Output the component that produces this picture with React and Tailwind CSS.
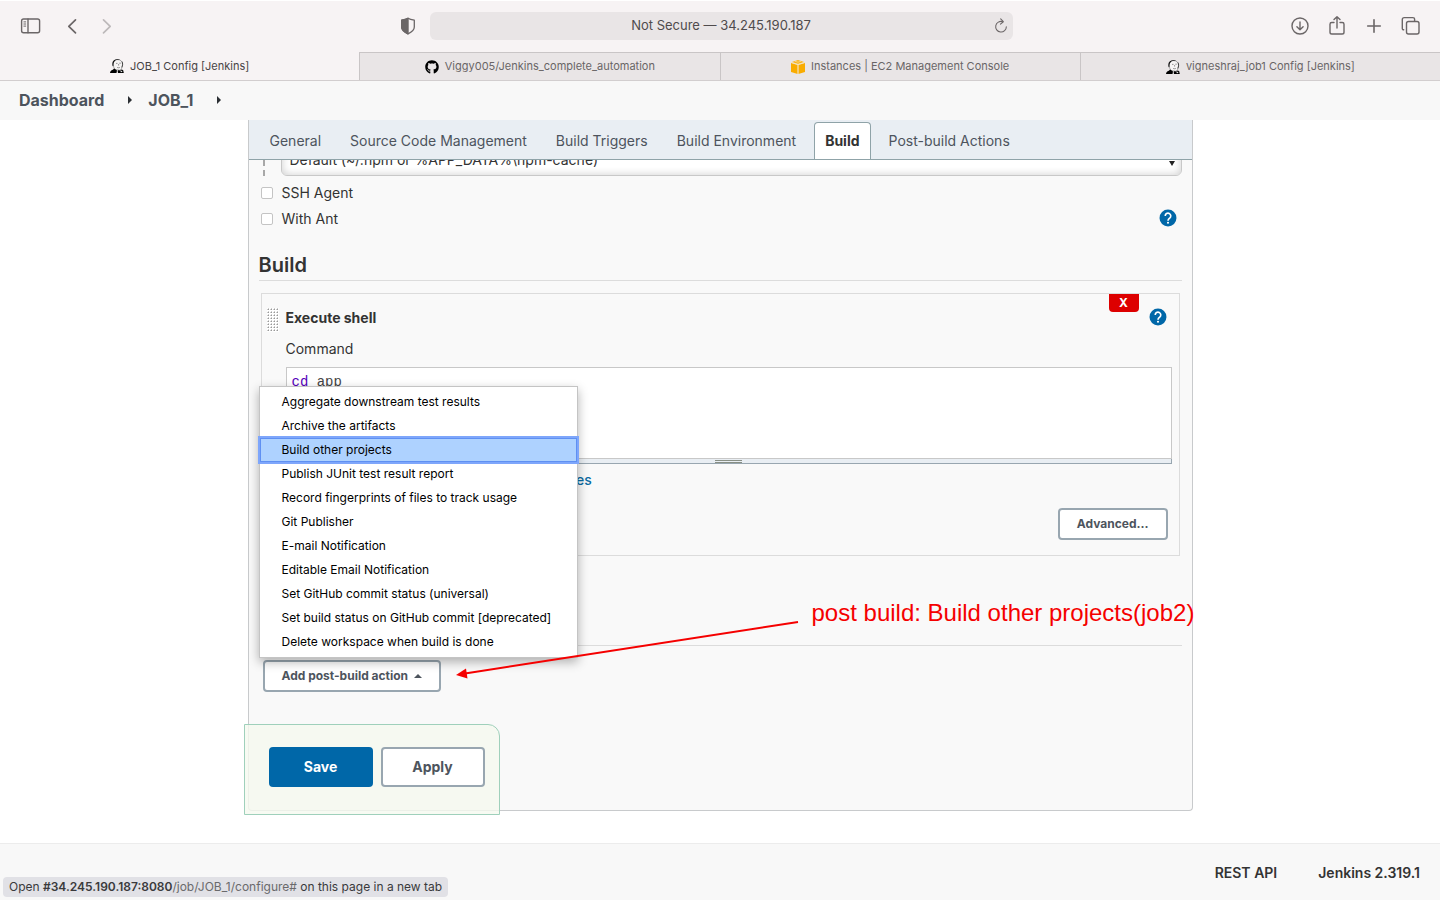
import { useState } from "react";
import { FaGithub } from "react-icons/fa";

const browserTabs = [
  { title: "JOB_1 Config [Jenkins]", icon: "jenkins", active: true },
  { title: "Viggy005/Jenkins_complete_automation", icon: "github" },
  { title: "Instances | EC2 Management Console", icon: "aws" },
  { title: "vigneshraj_job1 Config [Jenkins]", icon: "jenkins" },
];

const sections = [
  "General",
  "Source Code Management",
  "Build Triggers",
  "Build Environment",
  "Build",
  "Post-build Actions",
];

const postBuildActions = [
  "Aggregate downstream test results",
  "Archive the artifacts",
  "Build other projects",
  "Publish JUnit test result report",
  "Record fingerprints of files to track usage",
  "Git Publisher",
  "E-mail Notification",
  "Editable Email Notification",
  "Set GitHub commit status (universal)",
  "Set build status on GitHub commit [deprecated]",
  "Delete workspace when build is done",
];

function JenkinsIcon() {
  return (
    <svg viewBox="0 0 14 14" className="size-3.5" aria-hidden="true">
      <path d="M3 5.500C3 2 5 .600 7.600.600c3 0 5 1.800 5 5.200 0 2.700-1.300 4.700-3 5.400L4.500 10.500z" fill="#f6f4f4" stroke="#777" strokeWidth=".6" />
      <path d="M2.700 7.200C1.900 4.500 2.500 1.900 4.300.900 6.200-.1 9 .1 10.600 1.200 8.800.800 7.400 1.200 6.300 1.100 4.800 1.600 4.300 2.800 3.700 4 3.300 4.800 3.700 6.200 3.300 7z" fill="#111" />
      <path d="M12 2.500c.9 1.600.8 4-.3 5.900" fill="none" stroke="#222" strokeWidth=".8" />
      <path d="M6 4.400h1.500M9.300 4.200h1.500M8.600 5v1.600M7 8.300c1 .6 2.200.6 3 0" fill="none" stroke="#555" strokeWidth=".6" />
      <path d="M0 14c.1-1.700 1-2.700 2.800-3.300l1.500-1.300L7 11.600l-.5 2.400z" fill="#000" />
      <path d="M8 14l-.4-2.300 1.300-.7 1.300.7 1-1.200 1.900.4.700 3.100z" fill="#000" />
      <path d="M10.600 11.800h1.600v1.300h-1.600z" fill="#ddd" />
    </svg>
  );
}

function AwsIcon() {
  return (
    <svg viewBox="0 0 14 14" className="size-3.5" aria-hidden="true">
      <path d="M.9 2 7 .1 13.100 2 7 3.900z" fill="#f8b218" />
      <path d="M0 2.900 6.600 4.900V14L0 12z" fill="#f9ac00" />
      <path d="M14 2.900 7.400 4.900V14L14 12z" fill="#f9ac00" />
      <path d="M.2 2.400 7 4.400l6.800-2M7 4.400V14M3.800 1.200 7 2.200l3.200-1" fill="none" stroke="#fbe3ab" strokeWidth=".7" />
    </svg>
  );
}

function TabIcon({ name }) {
  if (name === "github") return <FaGithub className="size-3.5 text-black" aria-hidden="true" />;
  if (name === "aws") return <AwsIcon />;
  return <JenkinsIcon />;
}

function Glyph({ children, className = "size-6" }) {
  return (
    <svg
      viewBox="0 0 24 24"
      className={className}
      fill="none"
      stroke="currentColor"
      strokeWidth="1.4"
      strokeLinecap="round"
      strokeLinejoin="round"
      aria-hidden="true"
    >
      {children}
    </svg>
  );
}

function BrowserBar() {
  return (
    <header className="bg-[#f7f3f4] text-[#6b6667]">
      <div className="flex h-13 items-center border-t border-white pr-0.5 pb-0.5">
        <div className="flex flex-1 items-center pl-[19px]">
          <button type="button" aria-label="Show sidebar">
            <Glyph>
              <rect x="2.600" y="5" width="18" height="13.800" rx="2" />
              <path d="M9 5v13.800" />
              <path d="M4.900 7.900h1.800M4.900 10h1.800M4.900 12.100h1.800" strokeWidth="1" />
            </Glyph>
          </button>
          <button type="button" aria-label="Back" className="ml-[17px]">
            <Glyph>
              <path d="M15.500 5.900 8.800 12.400l6.700 6.500" strokeWidth="1.700" />
            </Glyph>
          </button>
          <button type="button" aria-label="Forward" className="ml-[11px] text-[#bdb9ba]">
            <Glyph>
              <path d="M8.500 5.900l6.700 6.500-6.700 6.500" strokeWidth="1.700" />
            </Glyph>
          </button>
          <button type="button" aria-label="Privacy report" className="ml-auto mr-2.5">
            <Glyph>
              <path d="M12 4.300c-2 1.200-4.300 1.600-6.300 1.900V13c0 3.200 2.900 5.300 6.300 6.800 3.400-1.500 6.300-3.600 6.300-6.800V6.200c-2-.3-4.300-.7-6.300-1.900z" strokeWidth="1.300" />
              <path d="M12 4.300c-2 1.200-4.300 1.600-6.300 1.900V13c0 3.200 2.900 5.300 6.300 6.800z" fill="currentColor" />
            </Glyph>
          </button>
        </div>
        <div className="flex h-7 w-[583px] items-center rounded-md bg-[#e9e5e6]">
          <label htmlFor="address" className="sr-only">Address</label>
          <input
            id="address"
            defaultValue="Not Secure — 34.245.190.187"
            className="ml-5 min-w-0 flex-1 bg-transparent text-center text-[13px] text-[#4f4b4c] outline-none"
          />
          <button type="button" aria-label="Reload" className="mr-1">
            <Glyph className="size-4">
              <path d="M14.500 5.500A8 8 0 1 0 20 13" strokeWidth="1.600" />
              <path d="M11.500 1.300l4 4.300-4.300 3.700" strokeWidth="1.600" />
            </Glyph>
          </button>
        </div>
        <div className="flex flex-1 items-center justify-end gap-[13px] pr-[15px]">
          <button type="button" aria-label="Downloads">
            <Glyph>
              <circle cx="12" cy="12" r="8" />
              <path d="M12 8v7.500M8.900 12.700l3.100 3.100 3.100-3.100" />
            </Glyph>
          </button>
          <button type="button" aria-label="Share">
            <Glyph>
              <path d="M9 8.500H6.800c-1 0-1.800.8-1.800 1.700v8c0 1 .8 1.800 1.800 1.800h10.400c1 0 1.800-.8 1.800-1.800v-8c0-.9-.8-1.700-1.800-1.700H15" />
              <path d="M12 14V2.800M9 5.600l3-2.900 3 2.900" />
            </Glyph>
          </button>
          <button type="button" aria-label="New tab">
            <Glyph>
              <path d="M12 5.700v12.600M5.700 12h12.600" strokeWidth="1.600" />
            </Glyph>
          </button>
          <button type="button" aria-label="Tab overview">
            <Glyph>
              <rect x="7.500" y="7.500" width="12.500" height="12.500" rx="2" />
              <path d="M4.700 15.800c-.8 0-1.400-.6-1.400-1.400V5.600c0-1.100.9-2 2-2h8.600c1 0 1.700.6 1.700 1.500v2.200" />
            </Glyph>
          </button>
        </div>
      </div>
      <nav aria-label="Browser tabs" className="flex h-[29px] border-b border-[#d2cecf] text-[11px]">
        {browserTabs.map((tab) => (
          <button
            key={tab.title}
            type="button"
            className={
              tab.active
                ? "flex flex-1 items-center justify-center gap-1.5 text-[#474344]"
                : "flex flex-1 items-center justify-center gap-1.5 border-t border-l border-[#c9c5c6] bg-[#e9e5e6] text-[#696566]"
            }
          >
            <TabIcon name={tab.icon} />
            {tab.title}
          </button>
        ))}
      </nav>
    </header>
  );
}

function CrumbArrow() {
  return (
    <svg viewBox="0 0 4 8" className="h-2 w-1" aria-hidden="true">
      <path d="M0 0l4 4-4 4z" fill="#2b2f33" />
    </svg>
  );
}

function HelpButton({ topic }) {
  return (
    <button type="button" aria-label={"Help for " + topic} className="mb-0.5 size-[18px] shrink-0">
      <svg viewBox="0 0 24 24" className="size-[18px]" aria-hidden="true">
        <circle cx="12" cy="12" r="11.300" fill="#0067a8" />
        <path d="M8.300 9.200a3.700 3.700 0 1 1 6 2.900c-1.300 1-2.300 1.700-2.300 3.400" fill="none" stroke="#fff" strokeWidth="2.200" />
        <circle cx="12" cy="18.300" r="1.400" fill="#fff" />
      </svg>
    </button>
  );
}

function OptionRow({ id, label, help }) {
  return (
    <div className="flex h-[26px] items-center pl-0.5 pr-[5px]">
      <input
        id={id}
        type="checkbox"
        className="size-3 appearance-none rounded-xs border border-[#c4c4c4] bg-white checked:bg-[#0067a8]"
      />
      <label htmlFor={id} className="ml-[9px] flex-1 text-sm">{label}</label>
      {help && <HelpButton topic={label} />}
    </div>
  );
}

function SectionTitle({ children, className }) {
  return (
    <h2 className={"border-b border-[#dcdcdc] pb-[3px] text-xl leading-6 font-semibold " + className}>
      {children}
    </h2>
  );
}

const outlineButton =
  "h-8 rounded border-2 border-[#98a6b0] bg-white px-[17px] text-xs font-bold text-[#4d545d]";

function ShellStep() {
  const [command, setCommand] = useState("cd app");
  const [keyword, ...rest] = command.split(" ");
  return (
    <section className="mx-0.5 mt-3 flex border border-[#dcdcdc] pb-[15px] pl-[5px] pr-[7px]">
      <svg className="mt-3.5 h-6 w-3 shrink-0" aria-hidden="true">
        <defs>
          <pattern id="grip" width="3" height="3" patternUnits="userSpaceOnUse">
            <rect width="3" height="3" fill="#fff" />
            <rect x="1" y="1" width="1" height="1" fill="#999" />
            <rect x="0" y="1" width="1" height="1" fill="#ccc" />
            <rect x="1" y="0" width="1" height="1" fill="#ccc" />
          </pattern>
        </defs>
        <rect width="12" height="24" fill="url(#grip)" />
      </svg>
      <div className="ml-[7px] min-w-0 flex-1">
        <div className="flex items-start">
          <h3 className="mt-3.5 flex-1 text-sm font-bold">Execute shell</h3>
          <button
            type="button"
            aria-label="Delete build step"
            className="mr-2.5 h-[18px] w-[30px] rounded-b bg-[#d00] text-xs leading-[18px] font-bold text-white"
          >
            X
          </button>
          <div className="mt-3.5 mr-[5px] flex h-5 items-center">
            <HelpButton topic="Execute shell" />
          </div>
        </div>
        <label htmlFor="command" className="mt-[11px] block text-sm">Command</label>
        <div className="mt-2 grid h-[92px] border border-[#c8c8c8] bg-white font-['Liberation_Mono',monospace] text-sm">
          <pre aria-hidden="true" className="col-start-1 row-start-1 px-[5px] py-1 font-[inherit] text-[#444]">
            <span className="text-[#5500bb]">{keyword}</span>
            {" " + rest.join(" ")}
          </pre>
          <textarea
            id="command"
            spellCheck="false"
            value={command}
            onChange={(e) => setCommand(e.target.value)}
            className="col-start-1 row-start-1 resize-none bg-transparent px-[5px] py-1 text-transparent caret-black outline-none"
          />
        </div>
        <div className="flex h-[5px] items-center justify-center border-r border-b border-[#98a6b0] bg-[#e9eef3]">
          <span className="h-[3px] w-[27px] border-y border-[#888f85]" />
        </div>
        <p className="mt-1.5 text-sm">
          See{" "}
          <a href="#variables" className="font-medium text-[#0b6aa2]">
            the list of available environment variables
          </a>
        </p>
        <div className="mt-[18px] flex justify-end pr-1">
          <button type="button" className={outlineButton}>Advanced...</button>
        </div>
      </div>
    </section>
  );
}

function PostBuildMenu() {
  return (
    <ul
      role="menu"
      className="absolute bottom-[34px] -left-1 w-[319px] border border-[#c4c4c4] bg-white py-[3px] text-xs text-black shadow-[0_4px_10px_rgba(0,0,0,0.3)]"
    >
      {postBuildActions.map((action) => (
        <li key={action} role="none">
          <a
            href="#add"
            role="menuitem"
            className={
              action === "Build other projects"
                ? "relative block h-6 bg-[#aed2ff] pl-[22px] leading-6 ring-2 ring-[#7ea6fb] inset-ring inset-ring-[#5f90f2]"
                : "block h-6 pl-[22px] leading-6"
            }
          >
            {action}
          </a>
        </li>
      ))}
    </ul>
  );
}

export default function App() {
  return (
    <div className="flex min-h-screen flex-col bg-white font-['Inter','Liberation_Sans',sans-serif] text-[#333]">
      <BrowserBar />
      <nav aria-label="Breadcrumbs" className="flex h-[39px] items-center bg-[#f8f8f8] pb-0.5 pl-[19px] text-base font-bold text-[#4d545d]">
        <a href="#dashboard">Dashboard</a>
        <span className="mr-3.5 ml-[22px] flex w-2 justify-center"><CrumbArrow /></span>
        <a href="#job">JOB_1</a>
        <span className="ml-[22px] flex w-2 justify-center"><CrumbArrow /></span>
      </nav>

      <main className="flex-1 pb-8">
        <form
          onSubmit={(e) => e.preventDefault()}
          className="mx-auto w-full max-w-[945px] rounded-b-sm border-x border-b border-[#c8cacc] bg-[#f9f9f9]"
        >
          <nav aria-label="Sections" className="flex h-10 items-end border-b border-[#8fa3a8] bg-[#e9eef3] pl-1.5 text-sm">
            {sections.map((name) => (
              <a
                key={name}
                href="#section"
                className={
                  name === "Build"
                    ? "mr-[3px] ml-1 h-[37px] rounded-t border border-b-0 border-[#8fa3a8] bg-white px-2.5 leading-9 font-bold text-[#333]"
                    : "mr-[3px] ml-1 h-[37px] border border-b-0 border-transparent px-2.5 leading-9 text-[#4d545d]"
                }
              >
                {name}
              </a>
            ))}
          </nav>

          <div className="px-2.5">
            <div className="flex h-4 items-end overflow-hidden">
              <div className="ml-1 h-4 w-[18px] border-l-2 border-dashed border-[#a8a8a8]" />
              <label htmlFor="cache" className="sr-only">Cache location</label>
              <div className="grid flex-1 items-center">
                <select
                  id="cache"
                  className="col-start-1 row-start-1 h-8 appearance-none rounded-md border border-[#c8c8c8] bg-white px-2 text-sm shadow-[inset_0_0_8px_rgba(0,0,0,0.2)]"
                >
                  <option>Default (~/.npm or %APP_DATA%\npm-cache)</option>
                </select>
                <svg viewBox="0 0 6 5" className="pointer-events-none col-start-1 row-start-1 mr-[7px] mt-1.5 h-[5px] w-1.5 justify-self-end" aria-hidden="true">
                  <path d="M0 0h6L3 5z" fill="#222" />
                </svg>
              </div>
            </div>

            <div className="mt-1">
              <OptionRow id="ssh-agent" label="SSH Agent" />
              <OptionRow id="with-ant" label="With Ant" help />
            </div>

            <SectionTitle className="mt-[21px]">Build</SectionTitle>
            <ShellStep />
            <button type="button" className={outlineButton + " mt-3 ml-1 block"}>Add build step</button>

            <div className="relative">
              <SectionTitle className="mt-[18px]">Post-build Actions</SectionTitle>
              <div className="relative mt-3.5 ml-1 w-fit">
                <button type="button" aria-haspopup="menu" aria-expanded="true" className={outlineButton + " flex items-center gap-1.5"}>
                  Add post-build action
                  <svg viewBox="0 0 8 4" className="h-1 w-2" aria-hidden="true">
                    <path d="M0 4 4 0l4 4z" fill="#4d545d" />
                  </svg>
                </button>
                <PostBuildMenu />
              </div>
              <div className="pointer-events-none absolute -top-[21px] left-[196px] flex items-start">
                <svg viewBox="0 0 344 84" className="mt-[21px] h-[84px] w-[344px]" aria-hidden="true">
                  <path d="M343 4 10 55.500" stroke="#f50000" strokeWidth="2" />
                  <path d="M1 57l10-6.500 1.500 10z" fill="#f50000" />
                </svg>
                <p className="ml-[13px] text-2xl whitespace-nowrap text-[#f50000] font-['Liberation_Sans',Arial,sans-serif]">
                  post build: Build other projects(job2)
                </p>
              </div>
            </div>

            <div className="relative mt-8 -mb-[5px] -ml-[15px] flex w-fit gap-2 rounded-tr-xl border border-[#9fd0bb] bg-[#f5f9ef]/80 pt-[22px] pr-3.5 pb-[27px] pl-6 text-sm font-bold">
              <button type="submit" className="h-10 w-[104px] rounded bg-[#0067a8] text-white">Save</button>
              <button type="button" className="h-10 w-[104px] rounded border-2 border-[#98a6b0] bg-white text-[#4d545d]">Apply</button>
            </div>
          </div>
        </form>
      </main>

      <footer className="flex h-[57px] items-center justify-end gap-[41px] border-t border-[#ececec] bg-[#f8f8f8] pt-0.5 pr-5 text-sm font-semibold">
        <a href="#api">REST API</a>
        <a href="#version">Jenkins 2.319.1</a>
      </footer>

      <div className="fixed bottom-[3px] left-[3px] h-5 rounded-sm bg-[#e1e1e6] px-1.5 text-xs leading-5 text-[#3a3a3c]">
        Open <span className="font-semibold">#34.245.190.187:8080</span>
        <span className="text-[#6a6a6c]">/job/JOB_1/configure#</span> on this page in a new tab
      </div>
    </div>
  );
}
